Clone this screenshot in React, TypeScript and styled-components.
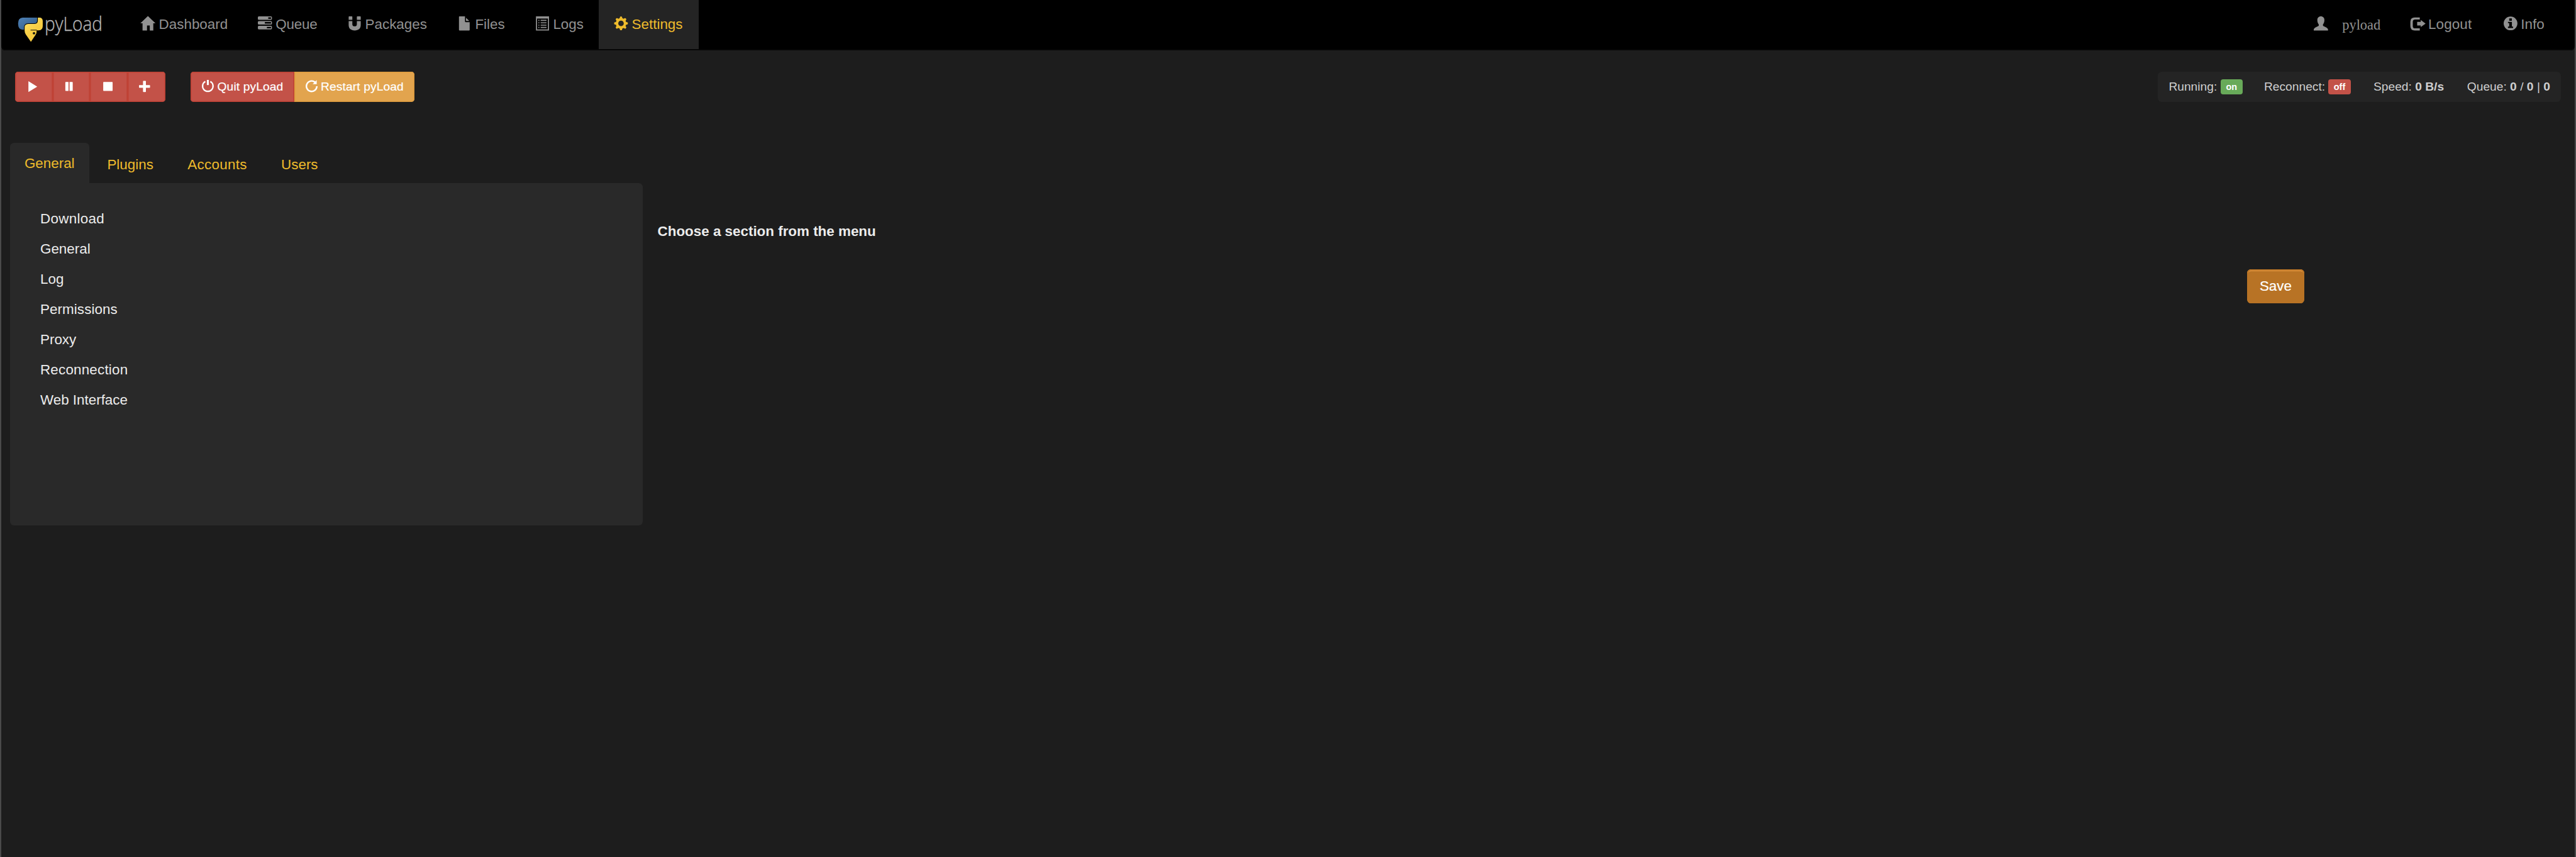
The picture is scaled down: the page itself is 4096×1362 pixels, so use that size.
import React from 'react';
import styled, { createGlobalStyle } from 'styled-components';

const u = (n: number) => `${Math.round(n * 800) / 1000}px`;

const sans = `"Liberation Sans", "Helvetica Neue", Helvetica, Arial, sans-serif`;

const GlobalStyle = createGlobalStyle`
  html, body { margin: 0; padding: 0; background: #1d1d1d; }
  * { box-sizing: border-box; }
`;

const Page = styled.div`
  min-height: 1362px;
  padding: 0 ${u(2)};
  background: #4a4a4a;
  font-family: ${sans};
  font-size: ${u(28)};
  color: #ececec;
  display: flex;
`;

const Body = styled.div`
  flex: 1;
  min-width: 0;
  background: #1d1d1d;
`;

const Navbar = styled.nav`
  display: flex;
  height: ${u(100)};
  background: #000;
  box-shadow: inset 0 -${u(2)} 0 #080808;
  border-radius: 0 0 ${u(8)} ${u(8)};
`;

const Brand = styled.a`
  display: block;
  width: ${u(248)};
  padding: ${u(10)} 0 0 ${u(32)};
`;

const NavGroup = styled.ul<{ $right?: boolean }>`
  display: flex;
  list-style: none;
  margin: 0 0 0 ${(p) => (p.$right ? 'auto' : '0')};
  padding: 0;
`;

const NavItem = styled.li<{ $w: number; $active?: boolean }>`
  display: flex;
  align-items: center;
  width: ${(p) => u(p.$w)};
  height: ${u(98)};
  padding-left: ${u(30)};
  gap: ${u(7.8)};
  color: ${(p) => (p.$active ? '#eebb2c' : '#919191')};
  background: ${(p) => (p.$active ? '#242424' : 'transparent')};
  white-space: nowrap;
`;

const NavText = styled.span<{ $ls?: number }>`
  line-height: ${u(40)};
  padding-bottom: ${u(1)};
  letter-spacing: ${(p) => u(p.$ls ?? 0)};
`;

const UserName = styled.span`
  font-family: "Liberation Serif", "Times New Roman", serif;
  line-height: ${u(40)};
  padding: ${u(3)} 0 0 ${u(20.5)};
`;

const NavGlyph = styled.svg`
  display: block;
  flex: none;
  width: ${u(28)};
  height: ${u(28)};
  margin-bottom: ${u(6)};
  overflow: visible;
  fill: currentColor;
`;

const Toolbar = styled.div`
  display: flex;
  align-items: flex-start;
  padding: ${u(42)} ${u(28)} 0;
`;

const ButtonGroup = styled.div`
  display: flex;
  margin-right: ${u(50.3)};
  border-radius: ${u(6)};
  overflow: hidden;
`;

const Button = styled.button<{ $w: number; $tone: 'danger' | 'warning' }>`
  display: flex;
  align-items: center;
  gap: ${u(6.7)};
  width: ${(p) => u(p.$w)};
  height: ${u(60)};
  padding: 0 0 0 ${u(22)};
  border: 0;
  color: #fff;
  font: ${u(24)} ${sans};
  letter-spacing: ${u(0.14)};
  -webkit-text-stroke: 0.2px #fff;
  white-space: nowrap;
  background: ${(p) => (p.$tone === 'danger' ? '#c35248' : '#e2a44e')};
  box-shadow: inset 0 0 0 ${u(2)} ${(p) => (p.$tone === 'danger' ? '#bf4235' : '#df9c3e')};
`;

const ButtonGlyph = styled.svg`
  display: block;
  flex: none;
  width: ${u(24)};
  height: ${u(24)};
  margin-bottom: ${u(2)};
  overflow: visible;
  fill: currentColor;
`;

const Status = styled.div`
  display: flex;
  align-items: center;
  margin-left: auto;
  width: ${u(801)};
  height: ${u(60)};
  padding-left: ${u(21.5)};
  border-radius: ${u(8)};
  background: #242424;
  color: #cfcfcf;
  font-size: ${u(24)};
`;

const StatusItem = styled.span<{ $w: number; $ls?: number }>`
  display: flex;
  align-items: center;
  gap: ${u(6.7)};
  width: ${(p) => u(p.$w)};
  white-space: nowrap;
  letter-spacing: ${(p) => u(p.$ls ?? 0)};
`;

const Badge = styled.span<{ $on?: boolean }>`
  display: flex;
  align-items: center;
  justify-content: center;
  width: ${u(44)};
  height: ${u(31)};
  margin-top: ${u(1)};
  border-radius: ${u(5)};
  background: ${(p) => (p.$on ? '#68aa59' : '#c35248')};
  color: #fff;
  font-size: ${u(18)};
  font-weight: 700;
  letter-spacing: 0;
`;

const Content = styled.div`
  display: flex;
  align-items: flex-start;
  padding: ${u(82)} ${u(18)} 0;
`;

const Sidebar = styled.div`
  width: ${u(1257)};
  flex: none;
`;

const Tabs = styled.ul`
  display: flex;
  list-style: none;
  margin: 0;
  padding: 0;
  height: ${u(80)};
  gap: ${u(4)};
`;

const Tab = styled.li<{ $w: number; $active?: boolean; $ls?: number }>`
  display: flex;
  align-items: center;
  justify-content: center;
  width: ${(p) => u(p.$w)};
  height: ${u(80)};
  padding-top: ${(p) => u(p.$active ? 1 : 6)};
  border-radius: ${u(8)} ${u(8)} 0 0;
  background: ${(p) => (p.$active ? '#292929' : 'transparent')};
  color: #eebb2c;
  letter-spacing: ${(p) => u(p.$ls ?? 0)};
`;

const Menu = styled.ul`
  list-style: none;
  margin: 0;
  height: ${u(680)};
  padding: ${u(41.25)} 0 0 ${u(60)};
  border-radius: 0 ${u(8)} ${u(8)} ${u(8)};
  background: #292929;
`;

const MenuItem = styled.li<{ $ls?: number }>`
  height: ${u(60)};
  line-height: ${u(60)};
  letter-spacing: ${(p) => u(p.$ls ?? 0)};
`;

const Main = styled.main`
  flex: 1;
  padding: ${u(154)} 0 0 ${u(30)};
`;

const Heading = styled.h4`
  margin: 0;
  font-size: ${u(28)};
  font-weight: 700;
  line-height: ${u(44)};
`;

const Actions = styled.div`
  display: flex;
  justify-content: flex-end;
  padding: ${u(53)} ${u(520)} 0 0;
`;

const SaveButton = styled.button`
  width: ${u(114)};
  height: ${u(68)};
  padding: 0 0 ${u(1)};
  border: 0;
  border-radius: ${u(8)};
  background: #b87325;
  box-shadow: inset 0 0 0 ${u(2)} #b87325, inset 0 ${u(4)} 0 #d88d39;
  color: #fff;
  font: ${u(28)} ${sans};
  -webkit-text-stroke: 0.2px #fff;
`;

const LogoSvg = styled.svg`
  display: block;
  width: ${u(186)};
  height: ${u(86)};
  overflow: visible;
`;

const Logo = () => (
  <LogoSvg viewBox="34 10 186 86">
    <defs>
      <linearGradient id="blue" x1="0" y1="0" x2="1" y2="1">
        <stop offset="0" stopColor="#4f83b8" />
        <stop offset="1" stopColor="#2f5580" />
      </linearGradient>
      <linearGradient id="yellow" x1="0" y1="0" x2="0.6" y2="1">
        <stop offset="0" stopColor="#ffe873" />
        <stop offset="0.55" stopColor="#f9cf45" />
        <stop offset="1" stopColor="#f5c93c" />
      </linearGradient>
    </defs>
    <path fill="url(#blue)" d="M45.5 35H74V40.500Q74 46.200 68.500 46.200H56.500Q48 46.700 48 54V59.200H45.500Q36.200 59 36.200 47Q36.200 35.200 45.500 35Z" />
    <path fill="url(#yellow)" d="M75.400 35H78.500Q85.200 35 85.200 42V52Q85.200 60.200 77.500 60.200H73V63Q73 66 71 69L61.700 83L51.500 68.500Q49.200 65 49.200 61V54Q49.200 47.800 56.500 47.500H69.500Q75.400 47 75.400 40.500Z" />
    <path stroke="#111" strokeWidth="1.300" d="M61 59.800H73.500" />
    <circle cx="67.800" cy="66" r="2.400" fill="#111" />
    <text x="89" y="61" fill="#b4b4b4" stroke="#b4b4b4" strokeWidth="0.500" fontFamily='"Open Sans", "Noto Sans", sans-serif' fontWeight="300" fontSize="38" textLength="115" lengthAdjust="spacingAndGlyphs">
      pyLoad
    </text>
  </LogoSvg>
);

const HomeIcon = () => (
  <NavGlyph viewBox="0 0 28 28"><path d="M14-.7L29 13.700H24.700V28H17.700V18H12.200V28H3.300V13.700H-1Z" /></NavGlyph>
);
const TasksIcon = () => (
  <NavGlyph viewBox="0 0 28 28">
    <path fillRule="evenodd" d="M2 0H26a2 2 0 0 1 2 2V5a2 2 0 0 1-2 2H2a2 2 0 0 1-2-2V2a2 2 0 0 1 2-2ZM20.700 2V5H26.200V2ZM2 9.400H26a2 2 0 0 1 2 2V14.400a2 2 0 0 1-2 2H2a2 2 0 0 1-2-2V11.400a2 2 0 0 1 2-2ZM13.900 11.400V14.400H26.200V11.400ZM2 18.800H26a2 2 0 0 1 2 2V23.800a2 2 0 0 1-2 2H2a2 2 0 0 1-2-2V20.800a2 2 0 0 1 2-2ZM18 20.800V23.800H26.200V20.800Z" />
  </NavGlyph>
);
const MagnetIcon = () => (
  <NavGlyph viewBox="0 0 28 28">
    <path d="M4 0H9.300a1 1 0 0 1 1 1V7H3V1a1 1 0 0 1 1-1ZM20.300 0H26a1 1 0 0 1 1 1V7H19.300V1a1 1 0 0 1 1-1ZM3 9.300H10.300V15.500Q10.300 19.700 14.900 19.700Q19.300 19.700 19.300 15.500V9.300H27V17.500C27 24 22.500 28 15 28C7.500 28 3 24 3 17.500Z" />
  </NavGlyph>
);
const FileIcon = () => (
  <NavGlyph viewBox="0 0 28 28">
    <path d="M4.500 0H15.500V10a1.500 1.500 0 0 0 1.500 1.500H24.800V27a1 1 0 0 1-1 1H4.500a1 1 0 0 1-1-1V1a1 1 0 0 1 1-1ZM17.500 2.800L24 9.200H17.500Z" />
  </NavGlyph>
);
const ListIcon = () => (
  <NavGlyph viewBox="0 0 28 28">
    <path fillRule="evenodd" d="M1.500 0H27.500V28H1.500ZM3.700 4.500V25.800H25.300V4.500Z" />
    <path d="M6.200 7h2.100v2h-2.100ZM6.200 11.800h2.100v2h-2.100ZM6.200 16.500h2.100v2h-2.100ZM6.200 21.100h2.100v2h-2.100ZM10.800 7h11.700v2H10.800ZM10.800 11.800h11.700v2H10.800ZM10.800 16.500h11.700v2H10.800ZM10.800 21.100h11.700v2H10.800Z" />
  </NavGlyph>
);
const CogIcon = () => (
  <NavGlyph viewBox="0 0 28 28">
    <circle cx="14.300" cy="14" r="8" fill="none" stroke="currentColor" strokeWidth="5" />
    {[0, 45, 90, 135, 180, 225, 270, 315].map((a) => (
      <path key={a} transform={`rotate(${a} 14.3 14)`} d="M11.300 4.800L12.300 1.200Q12.500 .4 13.300 .4H15.300Q16.100 .4 16.300 1.200L17.300 4.800Z" />
    ))}
  </NavGlyph>
);
const UserIcon = () => (
  <NavGlyph viewBox="0 0 28 28">
    <path d="M14.200 0C18.600 0 21.300 3 21.200 7.500C21.100 11.500 20 14 18.300 16.200V18C18.300 20 28.400 21.800 28.400 26.200V28H0V26.200C0 21.800 10 20 10 18V16.200C8.300 14 7.200 11.500 7.100 7.500C7 3 9.800 0 14.200 0Z" />
  </NavGlyph>
);
const LogoutIcon = () => (
  <NavGlyph viewBox="0 0 28 28">
    <path d="M19.500 2.300H9.500Q.8 2.300 .8 10.500V19.500Q.8 28 9.500 28H19.500V23.800H10.300Q5.600 23.800 5.600 19.300V11Q5.600 6.300 10.300 6.300H19.500ZM14.300 10.800H21.500V7.300L31 14.500L21.500 21.400V18.200H14.300Z" />
  </NavGlyph>
);
const InfoIcon = () => (
  <NavGlyph viewBox="0 0 28 28">
    <path fillRule="evenodd" d="M14.900 .3a13.600 13.600 0 1 1 0 27.300a13.600 13.600 0 1 1 0-27.300ZM12.300 4V8.600H17.500V4ZM9.800 10.800V13.400H12.300V20.300H9.800V23H20V20.300H17.600V10.800Z" />
  </NavGlyph>
);

const glyphs: Record<string, React.ReactNode> = {
  play: <path d="M4 2.500L21.500 13.300L4 24Z" />,
  pause: <path d="M4.500 4H9.900V22H4.500a.9 .9 0 0 1-.9-.9V4.900a.9 .9 0 0 1 .9-.9ZM12 4H17.400a.9 .9 0 0 1 .9 .9V21.100a.9 .9 0 0 1-.9 .9H12Z" />,
  stop: <rect x="3.900" y="4" width="18.700" height="18" rx="1" />,
  plus: <path d="M9 2H12.800a1 1 0 0 1 1 1V10.300H21a1 1 0 0 1 1 1V14.700a1 1 0 0 1-1 1H13.800V23a1 1 0 0 1-1 1H9a1 1 0 0 1-1-1V15.700H1a1 1 0 0 1-1-1V11.300a1 1 0 0 1 1-1H8V3a1 1 0 0 1 1-1Z" />,
  power: (
    <>
      <path fill="none" stroke="currentColor" strokeWidth="2.900" d="M6.800 3.200A10.400 10.400 0 1 0 16.800 3.200" />
      <rect x="9.900" y="0" width="3.900" height="10.200" />
    </>
  ),
  repeat: (
    <>
      <path fill="none" stroke="currentColor" strokeWidth="3" d="M22.300 12.500A10.400 10.400 0 1 1 18.500 4.400" />
      <path d="M22 .2V8.400H13.900Z" />
    </>
  ),
};

const ActionButton = ({ icon, label, w, tone = 'danger' }: { icon: string; label?: string; w: number; tone?: 'danger' | 'warning' }) => (
  <Button $w={w} $tone={tone}>
    <ButtonGlyph viewBox="0 0 24 24">{glyphs[icon]}</ButtonGlyph>
    {label}
  </Button>
);

const menu: Array<[string, number]> = [
  ['Download', 0.4],
  ['General', 0],
  ['Log', 0],
  ['Permissions', 0.1],
  ['Proxy', 0],
  ['Reconnection', 0.25],
  ['Web Interface', 0],
];

export default function App() {
  return (
    <>
      <GlobalStyle />
      <Page>
        <Body>
          <Navbar>
            <Brand><Logo /></Brand>
            <NavGroup>
              <NavItem $w={232}><HomeIcon /><NavText>Dashboard</NavText></NavItem>
              <NavItem $w={178}><TasksIcon /><NavText $ls={-0.2}>Queue</NavText></NavItem>
              <NavItem $w={218.5}><MagnetIcon /><NavText>Packages</NavText></NavItem>
              <NavItem $w={155}><FileIcon /><NavText>Files</NavText></NavItem>
              <NavItem $w={156.5}><ListIcon /><NavText>Logs</NavText></NavItem>
              <NavItem $w={199} $active><CogIcon /><NavText>Settings</NavText></NavItem>
            </NavGroup>
            <NavGroup $right>
              <NavItem $w={191.5}><UserIcon /><UserName>pyload</UserName></NavItem>
              <NavItem $w={184}><LogoutIcon /><NavText $ls={0.15}>Logout</NavText></NavItem>
              <NavItem $w={173.5}><InfoIcon /><NavText>Info</NavText></NavItem>
            </NavGroup>
          </Navbar>

          <Toolbar>
            <ButtonGroup>
              <ActionButton icon="play" w={74.67} />
              <ActionButton icon="pause" w={74.67} />
              <ActionButton icon="stop" w={74.67} />
              <ActionButton icon="plus" w={75} />
            </ButtonGroup>
            <ButtonGroup>
              <ActionButton icon="power" label="Quit pyLoad" w={205.7} />
              <ActionButton icon="repeat" label="Restart pyLoad" w={239} tone="warning" />
            </ButtonGroup>
            <Status>
              <StatusItem $w={189.5}>Running: <Badge $on>on</Badge></StatusItem>
              <StatusItem $w={217.5}>Reconnect: <Badge>off</Badge></StatusItem>
              <StatusItem $w={186}>Speed: <b>0 B/s</b></StatusItem>
              <StatusItem $w={166}>Queue: <b>0</b>/<b>0</b>|<b>0</b></StatusItem>
            </Status>
          </Toolbar>

          <Content>
            <Sidebar>
              <Tabs>
                <Tab $w={157} $active>General</Tab>
                <Tab $w={156}>Plugins</Tab>
                <Tab $w={182} $ls={0.4}>Accounts</Tab>
                <Tab $w={137}>Users</Tab>
              </Tabs>
              <Menu>
                {menu.map(([label, ls]) => (
                  <MenuItem key={label} $ls={ls}>{label}</MenuItem>
                ))}
              </Menu>
            </Sidebar>
            <Main>
              <Heading>Choose a section from the menu</Heading>
              <Actions><SaveButton>Save</SaveButton></Actions>
            </Main>
          </Content>
        </Body>
      </Page>
    </>
  );
}
